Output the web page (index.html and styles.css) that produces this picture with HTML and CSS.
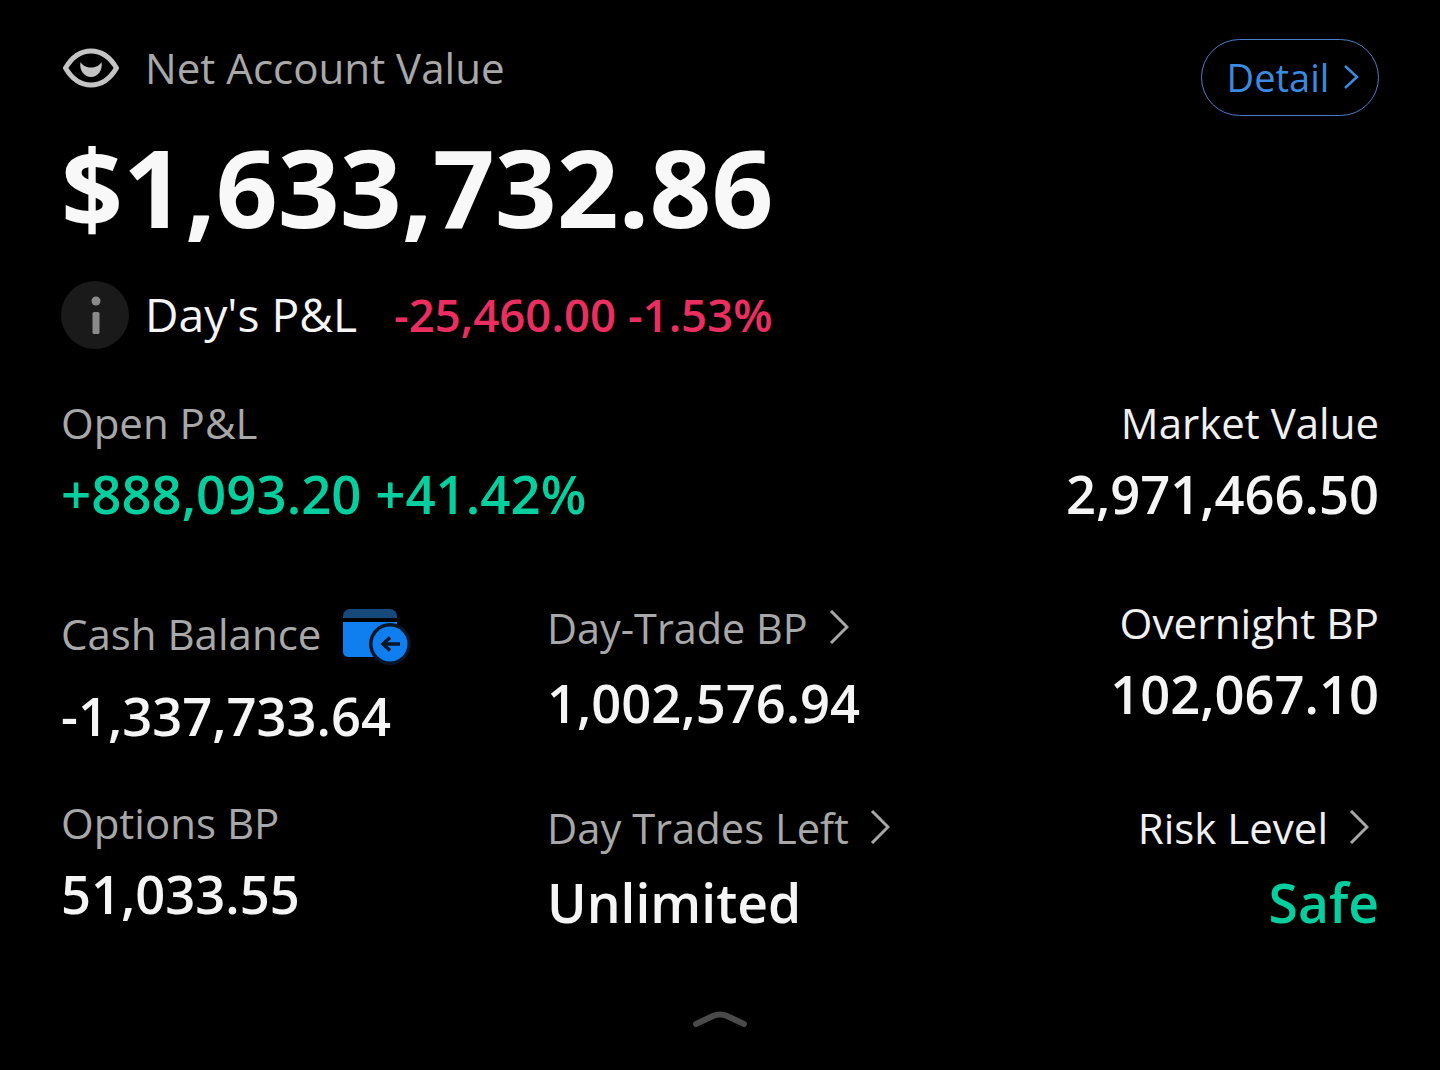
FILE: index.html
```html
<!DOCTYPE html>
<html>

	<head>
		<meta charset="utf-8" />
		<title>Net Account Value</title>
		<link rel="stylesheet" href="styles.css">
	</head>

	<body>
		<div class="card">
			<div class="top">
				<div class="net">
					<svg class="eye" width="56" height="40" viewBox="0 0 56 40">
						<path d="M2.500 20C9 9 18 3 28 3S47 9 53.500 20C47 31 38 37 28 37S9 31 2.500 20Z" fill="none" stroke="#c4c4c4" stroke-width="5" stroke-linejoin="round" />
						<path d="M17.500 14C20 18 23.500 19.500 28 19.500S36 18 38.500 14C40 22 35 29 28 29S16 22 17.500 14Z" fill="#c4c4c4" />
					</svg>
					<span class="net-label">Net Account Value</span>
				</div>
				<a href="#" class="detail">Detail
					<svg width="16" height="26" viewBox="0 0 16 26"><path d="M2 2L14 13L2 24" fill="none" stroke="#3a8ae0" stroke-width="2.500" /></svg>
				</a>
			</div>

			<div class="total">$1,633,732.86</div>

			<div class="day">
				<span class="info">
					<svg width="12" height="38" viewBox="0 0 12 38">
						<circle cx="6" cy="5" r="4.500" fill="#8a8a8a" />
						<rect x="2.500" y="16" width="7" height="22" rx="1.500" fill="#8a8a8a" />
					</svg>
				</span>
				<span class="day-label">Day's P&amp;L</span>
				<span class="day-value">-25,460.00 -1.53%</span>
			</div>

			<div class="open">
				<div>
					<div class="label">Open P&amp;L</div>
					<div class="value green open-value">+888,093.20 +41.42%</div>
				</div>
				<div class="right">
					<div class="label white">Market Value</div>
					<div class="value">2,971,466.50</div>
				</div>
			</div>

			<div class="grid">
				<div class="cell cash">
					<div class="label">Cash Balance
						<svg class="wallet" width="68" height="54" viewBox="0 -1 68 54">
							<path d="M1 10V8a7 7 0 0 1 7-7h40a7 7 0 0 1 7 7v2Z" fill="#174a7a" />
							<path d="M1 14h54v35H6a5 5 0 0 1-5-5Z" fill="#0f7fef" />
							<circle cx="48" cy="36" r="21" fill="#071526" />
							<circle cx="48" cy="36" r="17.500" fill="#0f7fef" />
							<path d="M58 36H42M48 29.500L41 36L48 42.500" fill="none" stroke="#071526" stroke-width="3.500" />
						</svg>
					</div>
					<div class="value">-1,337,733.64</div>
				</div>
				<div class="cell trade">
					<div class="label">Day-Trade BP
						<svg class="chev" width="20" height="36" viewBox="0 0 20 36"><path d="M2 2L18 18L2 34" fill="none" stroke="#a8a8a8" stroke-width="3" /></svg>
					</div>
					<div class="value">1,002,576.94</div>
				</div>
				<div class="cell right overnight">
					<div class="label white">Overnight BP</div>
					<div class="value">102,067.10</div>
				</div>
				<div class="cell options">
					<div class="label">Options BP</div>
					<div class="value">51,033.55</div>
				</div>
				<div class="cell trades-left">
					<div class="label">Day Trades Left
						<svg class="chev" width="20" height="36" viewBox="0 0 20 36"><path d="M2 2L18 18L2 34" fill="none" stroke="#a8a8a8" stroke-width="3" /></svg>
					</div>
					<div class="value big">Unlimited</div>
				</div>
				<div class="cell right risk">
					<div class="label white">Risk Level
						<svg class="chev" width="20" height="36" viewBox="0 0 20 36"><path d="M2 2L18 18L2 34" fill="none" stroke="#a8a8a8" stroke-width="3" /></svg>
					</div>
					<div class="value big green">Safe</div>
				</div>
			</div>

			<div class="collapse">
				<svg width="58" height="20" viewBox="0 0 58 20"><path d="M5 16L22 8Q29 5 36 8L53 16" fill="none" stroke="#4a4a4a" stroke-width="6" stroke-linecap="round" /></svg>
			</div>
		</div>
	</body>

</html>
```

FILE: styles.css
```css
* {
	margin: 0;
	padding: 0;
	box-sizing: border-box;
}

a {
	text-decoration: none;
}

body {
	background: #000;
	font-family: "Open Sans", "Noto Sans", sans-serif;
	color: #f5f5f5;
}

.card {
	width: 1440px;
	height: 1070px;
	padding: 39px 61px 0 61px;
	overflow: hidden;
}

.top {
	display: flex;
	justify-content: space-between;
	align-items: flex-start;
}

.net {
	display: flex;
	align-items: center;
	gap: 26px;
	height: 58px;
}

.eye {
	margin-left: 2px;
}

.net-label {
	margin-top: -1px;
	font-size: 42.100px;
	color: #a8a8a8;
}

.detail {
	display: flex;
	align-items: center;
	justify-content: center;
	gap: 14px;
	width: 178px;
	height: 77px;
	padding: 0 0 2px 6px;
	border: 1.500px solid #4a7ccc;
	border-radius: 39px;
	font-size: 38px;
	color: #3a8ae0;
}

.total {
	margin-top: 7px;
	font-size: 108.400px;
	line-height: 126px;
	font-weight: 700;
	color: #f8f8f8;
}

.day {
	display: flex;
	align-items: center;
	margin-top: 32px;
	height: 68px;
}

.info {
	display: flex;
	align-items: center;
	justify-content: center;
	width: 68px;
	height: 68px;
	border-radius: 50%;
	background: #1a1a1a;
}

.info svg {
	margin-left: 1px;
}

.day-label {
	margin: -2px 0 0 16px;
	font-size: 46.200px;
	color: #f5f5f5;
}

.day-value {
	margin: -2px 0 0 37px;
	font-size: 45.600px;
	font-weight: 600;
	color: #ea2f60;
}

.open {
	display: flex;
	justify-content: space-between;
	margin-top: 46px;
}

.label {
	display: flex;
	align-items: center;
	gap: 21px;
	font-size: 42px;
	line-height: 56px;
	color: #a8a8a8;
}

.white {
	color: #f0f0f0;
}

.value {
	margin-top: 7px;
	font-size: 52.500px;
	line-height: 72px;
	font-weight: 600;
	color: #f5f5f5;
}

.open-value {
	font-size: 52.800px;
}

.big {
	font-size: 53.400px;
	margin-top: 11px;
}

.green {
	color: #06cf9f;
}

.right {
	text-align: right;
}

.right .label {
	justify-content: flex-end;
}

.grid {
	display: grid;
	grid-template-columns: 486px 1fr auto;
	margin-top: 65px;
}

.cell {
	height: 200px;
}

.cash {
	padding-top: 11px;
}

.cash .value {
	margin-top: 18px;
}

.wallet {
	overflow: visible;
}

.chev {
	margin-top: -2px;
}

.trade,
.trades-left,
.risk {
	padding-top: 5px;
}

.trade .label {
	font-size: 41.400px;
}

.trades-left .label {
	font-size: 41.700px;
}

.overnight .label {
	font-size: 42.300px;
}

.trade .value {
	margin-top: 11px;
}

.risk .chev {
	margin-right: 10px;
}

.collapse {
	display: flex;
	justify-content: center;
	margin-top: 13px;
}
```
